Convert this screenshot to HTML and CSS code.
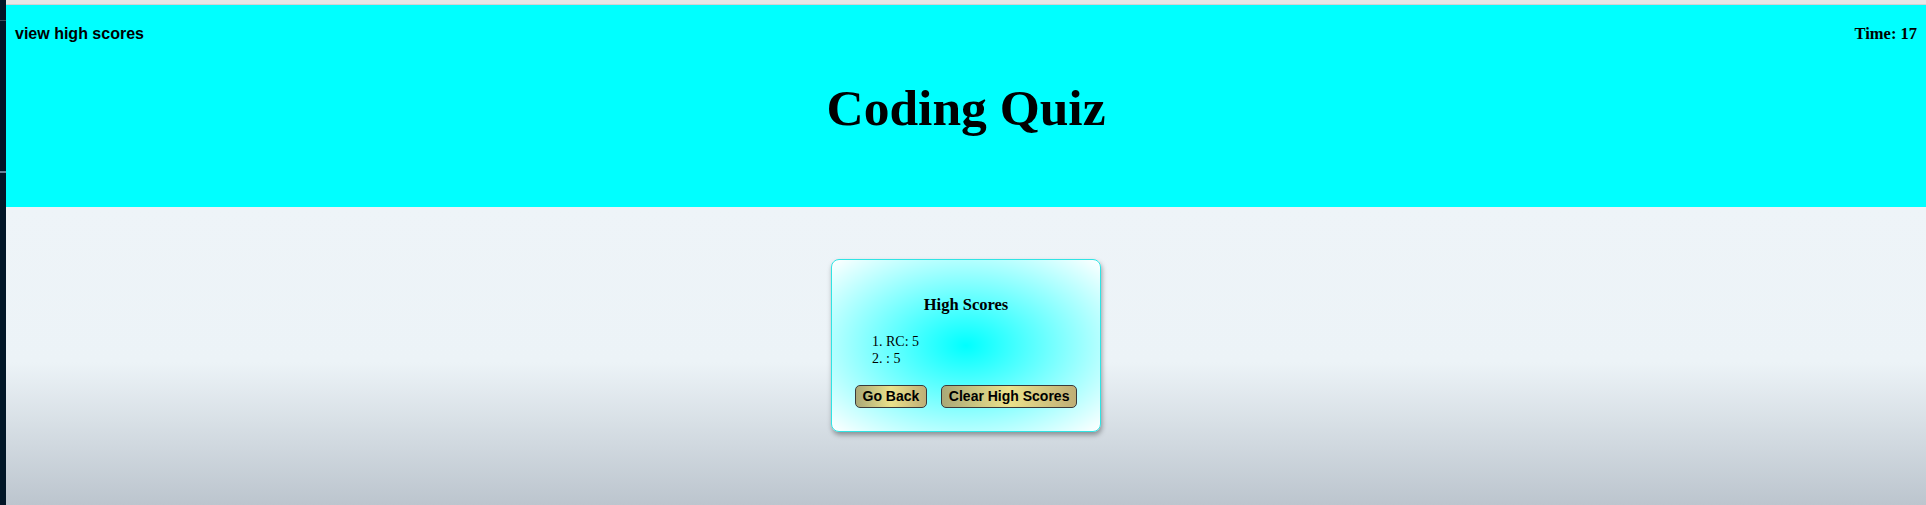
FILE: index.html
```html
<!DOCTYPE html>
<html lang="en">
<head>
<meta charset="utf-8">
<title>Coding Quiz</title>
<link rel="stylesheet" href="styles.css">
</head>
<body>
<div class="window">
  <div class="sidebar">
    <div class="tick tick-a"></div>
    <div class="tick tick-b"></div>
  </div>
  <div class="page">
    <div class="topline"></div>
    <header class="header">
      <div class="header-row">
        <a class="view-link" href="#">view high scores</a>
        <p class="timer">Time: 17</p>
      </div>
      <h1 class="title">Coding Quiz</h1>
    </header>
    <main class="stage">
      <section class="card">
        <h3 class="card-title">High Scores</h3>
        <ol class="score-list">
          <li>RC: 5</li>
          <li>: 5</li>
        </ol>
        <div class="actions">
          <button class="btn" type="button">Go Back</button>
          <button class="btn" type="button">Clear High Scores</button>
        </div>
      </section>
    </main>
  </div>
</div>
</body>
</html>
```

FILE: styles.css
```css
html, body {
  margin: 0;
  padding: 0;
  height: 100%;
  overflow: hidden;
}

body {
  font-family: "Liberation Serif", "Times New Roman", serif;
  color: #000;
}

.window {
  display: flex;
  height: 505px;
}

.sidebar {
  width: 6px;
  flex: 0 0 6px;
  background: #011627;
  padding-top: 20px;
  box-sizing: border-box;
}

.tick {
  width: 6px;
}

.tick-a {
  height: 1px;
  background: #3c4b5a;
}

.tick-b {
  height: 2px;
  margin-top: 150px;
  background: #6a7f94;
}

.page {
  flex: 1;
  display: flex;
  flex-direction: column;
  min-width: 0;
}

.topline {
  height: 4px;
  background: #e6e6e6;
  border-bottom: 1px solid #d2d2d2;
}

.header {
  height: 202px;
  background: #00ffff;
  display: flex;
  flex-direction: column;
}

.header-row {
  display: flex;
  justify-content: space-between;
  align-items: baseline;
  padding: 18.5px 9px 0 9px;
}

.view-link {
  font-family: "Liberation Sans", Arial, sans-serif;
  font-weight: bold;
  font-size: 16px;
  color: #000;
  text-decoration: none;
}

.timer {
  margin: 0;
  font-family: "Liberation Serif", "Times New Roman", serif;
  font-weight: bold;
  font-size: 16.5px;
}

.title {
  margin: 35.5px 0 0 0;
  text-align: center;
  font-family: "Liberation Serif", "Times New Roman", serif;
  font-weight: bold;
  font-size: 51.5px;
  line-height: 57px;
}

.stage {
  flex: 1;
  display: flex;
  justify-content: center;
  align-items: flex-start;
  padding-top: 52px;
  background: linear-gradient(to bottom, #eef4f8 0%, #ecf3f7 52%, #bcc5ce 100%);
}

.card {
  box-sizing: border-box;
  width: 270px;
  height: 173px;
  border: 1px solid #2fe4e4;
  border-radius: 8px;
  background: radial-gradient(ellipse at center, #00ffff 0%, #ffffff 100%);
  box-shadow: 1px 3px 5px rgba(0, 0, 0, 0.35);
  padding: 35px 0 0 0;
  display: flex;
  flex-direction: column;
}

.card-title {
  margin: 0;
  text-align: center;
  font-size: 16.5px;
  line-height: 19px;
  font-weight: bold;
}

.score-list {
  margin: 18.5px 0 0 0;
  padding-left: 54px;
  font-size: 14px;
  line-height: 17px;
}

.actions {
  display: flex;
  justify-content: center;
  gap: 13.5px;
  margin-top: 18.5px;
}

.btn {
  font-family: "Liberation Sans", Arial, sans-serif;
  font-weight: bold;
  font-size: 14px;
  line-height: 16.5px;
  color: #000;
  padding: 2.2px 7px;
  border: 1px solid #3a3a3a;
  border-radius: 5px;
  background: linear-gradient(to right, #aaa877 0%, #ebe28b 50%, #bfae76 100%);
  cursor: pointer;
}
```
